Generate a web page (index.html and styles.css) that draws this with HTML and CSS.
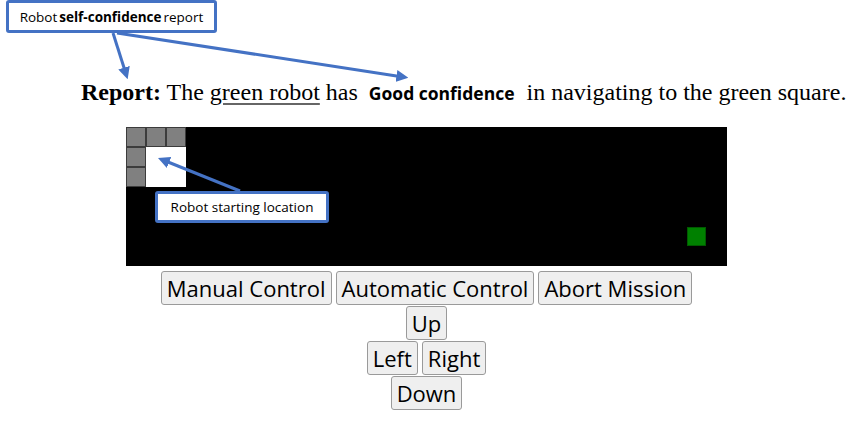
FILE: index.html
```html
<!DOCTYPE html>
<html>
<head>
<meta charset="utf-8">
<link rel="stylesheet" href="styles.css">
</head>
<body>
<div class="page">
  <p class="report"><b>Report:</b> The <span class="u">green robot</span> has <span class="conf">Good confidence</span> in navigating to the green square.</p>

  <div class="stage">
    <div class="world">
      <div class="cell gray" style="left:0;top:0"></div>
      <div class="cell gray" style="left:20px;top:0"></div>
      <div class="cell gray" style="left:40px;top:0"></div>
      <div class="cell gray" style="left:0;top:20px"></div>
      <div class="cell gray" style="left:0;top:40px"></div>
      <div class="robot" style="left:20px;top:20px"></div>
      <div class="goal" style="left:561px;top:100px"></div>
    </div>
    <div class="controls">
      <div class="row">
        <button>Manual Control</button>
        <button>Automatic Control</button>
        <button>Abort Mission</button>
      </div>
      <div class="row"><button>Up</button></div>
      <div class="row"><button>Left</button><button>Right</button></div>
      <div class="row"><button>Down</button></div>
    </div>
  </div>

  <div class="callout callout-top">Robot <b>self-confidence</b> report</div>
  <div class="callout callout-start">Robot starting location</div>

  <svg class="arrows" width="857" height="422" viewBox="0 0 857 422">
    <defs>
      <marker id="ah" markerWidth="4" markerHeight="4" refX="2.2" refY="2" orient="auto" markerUnits="strokeWidth">
        <path d="M0,0 L4,2 L0,4 Z" fill="#4472c4"/>
      </marker>
    </defs>
    <line x1="113" y1="33" x2="126" y2="74" stroke="#4472c4" stroke-width="3" marker-end="url(#ah)"/>
    <line x1="117" y1="33" x2="403" y2="77" stroke="#4472c4" stroke-width="3" marker-end="url(#ah)"/>
    <line x1="240" y1="191" x2="163" y2="160" stroke="#4472c4" stroke-width="3" marker-end="url(#ah)"/>
  </svg>
</div>
</body>
</html>
```

FILE: styles.css
```css
html, body {
  margin: 0;
  padding: 0;
  background: #ffffff;
}

.page {
  position: relative;
  width: 857px;
  height: 422px;
  overflow: hidden;
}

.report {
  margin: 0;
  padding: 78px 0 0 81px;
  height: 28px;
  line-height: 28px;
  font-family: "Liberation Serif", "Times New Roman", serif;
  font-size: 24px;
  color: #000;
  white-space: nowrap;
}

.report .u {
  text-decoration: underline;
  text-decoration-color: #666;
  text-underline-offset: 3px;
}

.report .conf {
  font-family: "Open Sans", sans-serif;
  font-weight: 700;
  font-size: 17.5px;
  line-height: 1;
  margin: 0 6px 0 5px;
}

.stage {
  margin: 21px 0 0 126px;
  width: 601px;
}

.world {
  position: relative;
  width: 601px;
  height: 139px;
  background: #000;
}

.cell {
  position: absolute;
  width: 20px;
  height: 20px;
  box-sizing: border-box;
}

.gray {
  background: #808080;
  border: 1px solid #3c3c3c;
}

.robot {
  position: absolute;
  width: 40px;
  height: 40px;
  background: #ffffff;
}

.goal {
  position: absolute;
  width: 19px;
  height: 19px;
  box-sizing: border-box;
  background: #008000;
  border: 1px solid #005a00;
}

.controls {
  display: flex;
  flex-direction: column;
  gap: 1px;
  margin-top: 5px;
}

.row {
  display: flex;
  justify-content: center;
  gap: 4px;
}

button {
  height: 34px;
  padding: 0 5px;
  margin: 0;
  font-family: "Open Sans", sans-serif;
  font-size: 22px;
  line-height: 30px;
  color: #000;
  background: #efefef;
  border: 1px solid #9a9a9a;
  border-radius: 3px;
}

.callout {
  position: absolute;
  box-sizing: border-box;
  background: #fff;
  border: 3px solid #4472c4;
  border-radius: 3px;
  font-family: "Open Sans", sans-serif;
  font-size: 13.5px;
  color: #000;
  display: flex;
  align-items: center;
  justify-content: center;
  white-space: nowrap;
}

.callout b {
  font-weight: 700;
  margin: 0 2px;
}

.callout-top {
  left: 6px;
  top: 0;
  width: 211px;
  height: 33px;
}

.callout-start {
  left: 155px;
  top: 191px;
  width: 174px;
  height: 32px;
}

.arrows {
  position: absolute;
  left: 0;
  top: 0;
  pointer-events: none;
}
```
